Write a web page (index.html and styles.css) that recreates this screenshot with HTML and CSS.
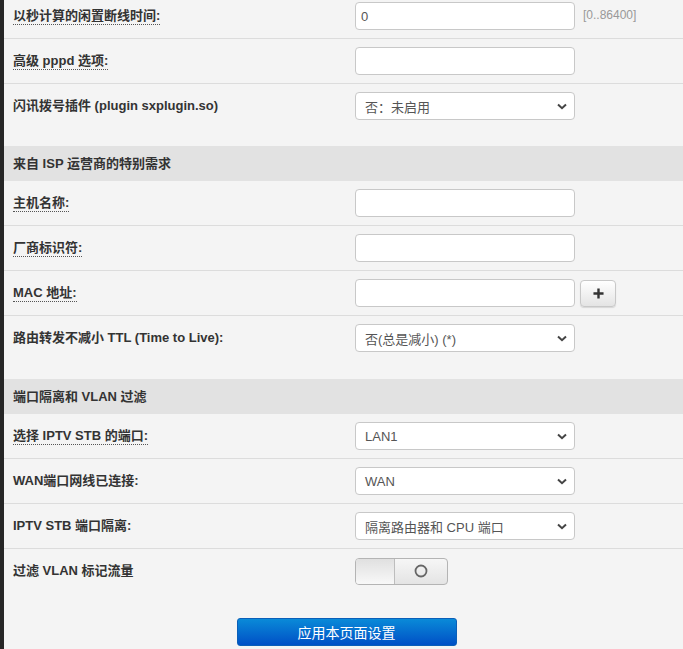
FILE: index.html
```html
<!DOCTYPE html>
<html lang="zh-CN">
<head>
<meta charset="utf-8">
<title>WAN 设置</title>
<link rel="stylesheet" href="styles.css">
</head>
<body>
<div class="page">
  <div class="form">
    <div class="row">
      <div class="label"><span class="tip">以秒计算的闲置断线时间:</span></div>
      <div class="field"><input class="input" type="text" value="0"><span class="hint">[0..86400]</span></div>
    </div>
    <div class="row">
      <div class="label"><span class="tip">高级 pppd 选项:</span></div>
      <div class="field"><input class="input" type="text" value=""></div>
    </div>
    <div class="row tall">
      <div class="label">闪讯拨号插件 (plugin sxplugin.so)</div>
      <div class="field">
        <div class="select"><span>否：未启用</span><svg class="chev" viewBox="0 0 10 7" width="10" height="7"><path d="M1 1.5 L5 5.2 L9 1.5" fill="none" stroke="#444" stroke-width="2"/></svg></div>
      </div>
    </div>
    <div class="section">来自 ISP 运营商的特别需求</div>
    <div class="row">
      <div class="label"><span class="tip">主机名称:</span></div>
      <div class="field"><input class="input" type="text" value=""></div>
    </div>
    <div class="row">
      <div class="label"><span class="tip">厂商标识符:</span></div>
      <div class="field"><input class="input" type="text" value=""></div>
    </div>
    <div class="row">
      <div class="label"><span class="tip">MAC 地址:</span></div>
      <div class="field"><input class="input" type="text" value=""><button class="plus" type="button"><svg viewBox="0 0 12 12" width="11" height="11"><path d="M6 0.5 V11.5 M0.5 6 H11.5" stroke="#333" stroke-width="2.6"/></svg></button></div>
    </div>
    <div class="row tall taller">
      <div class="label">路由转发不减小 TTL (Time to Live):</div>
      <div class="field">
        <div class="select"><span>否(总是减小) (*)</span><svg class="chev" viewBox="0 0 10 7" width="10" height="7"><path d="M1 1.5 L5 5.2 L9 1.5" fill="none" stroke="#444" stroke-width="2"/></svg></div>
      </div>
    </div>
    <div class="section">端口隔离和 VLAN 过滤</div>
    <div class="row">
      <div class="label"><span class="tip">选择 IPTV STB 的端口:</span></div>
      <div class="field">
        <div class="select"><span>LAN1</span><svg class="chev" viewBox="0 0 10 7" width="10" height="7"><path d="M1 1.5 L5 5.2 L9 1.5" fill="none" stroke="#444" stroke-width="2"/></svg></div>
      </div>
    </div>
    <div class="row">
      <div class="label">WAN端口网线已连接:</div>
      <div class="field">
        <div class="select"><span>WAN</span><svg class="chev" viewBox="0 0 10 7" width="10" height="7"><path d="M1 1.5 L5 5.2 L9 1.5" fill="none" stroke="#444" stroke-width="2"/></svg></div>
      </div>
    </div>
    <div class="row">
      <div class="label">IPTV STB 端口隔离:</div>
      <div class="field">
        <div class="select"><span>隔离路由器和 CPU 端口</span><svg class="chev" viewBox="0 0 10 7" width="10" height="7"><path d="M1 1.5 L5 5.2 L9 1.5" fill="none" stroke="#444" stroke-width="2"/></svg></div>
      </div>
    </div>
    <div class="row last">
      <div class="label">过滤 VLAN 标记流量</div>
      <div class="field">
        <div class="toggle"><span class="knob"></span><span class="off"><svg viewBox="0 0 14 14" width="14" height="14"><circle cx="7" cy="7" r="5.5" fill="none" stroke="#666" stroke-width="1.8"/></svg></span></div>
      </div>
    </div>
  </div>
  <div class="actions">
    <button class="apply" type="button">应用本页面设置</button>
  </div>
</div>
</body>
</html>
```

FILE: styles.css
```css
html, body {
  margin: 0;
  padding: 0;
  background: #f4f4f4;
  height: 100%;
  overflow: hidden;
}
body {
  font-family: "Liberation Sans", Arial, "Noto Sans CJK SC", sans-serif;
  font-size: 13px;
  color: #333;
  border-left: 4px solid #262626;
  box-sizing: border-box;
}
.page {
  margin-top: -6px;
}
.row {
  display: grid;
  grid-template-columns: 342px 1fr;
  padding: 8px 0 8px 9px;
  border-bottom: 1px solid #dcdcdc;
}
.row.tall {
  padding-bottom: 26px;
  border-bottom: none;
}
.row.taller {
  padding-bottom: 27px;
}
.row.last {
  border-bottom: none;
}
.label {
  font-weight: bold;
  line-height: 28px;
  height: 28px;
  color: #333;
  white-space: nowrap;
}
.tip {
  border-bottom: 1px dotted #555;
  padding-bottom: 1px;
}
.field {
  display: flex;
  align-items: center;
  height: 28px;
}
.input {
  box-sizing: border-box;
  width: 220px;
  height: 28px;
  border: 1px solid #c8c8c8;
  border-radius: 4px;
  background: #fff;
  padding: 0 5px;
  font-family: "Liberation Sans", Arial, "Noto Sans CJK SC", sans-serif;
  font-size: 13px;
  color: #555;
  outline: none;
}
.hint {
  margin-left: 8px;
  color: #999;
  font-size: 12px;
  margin-top: -3px;
}
.select {
  box-sizing: border-box;
  width: 220px;
  height: 28px;
  border: 1px solid #c8c8c8;
  border-radius: 4px;
  background: #fff;
  padding: 0 0 0 9px;
  display: flex;
  align-items: center;
  justify-content: space-between;
  color: #555;
  position: relative;
}
.chev {
  margin-right: 7px;
}
.section {
  background: #e2e2e2;
  font-weight: bold;
  height: 35px;
  line-height: 35px;
  padding-left: 9px;
  color: #333;
}
.plus {
  box-sizing: border-box;
  width: 36px;
  height: 27px;
  margin-left: 5px;
  border: 1px solid #c8c8c8;
  border-radius: 4px;
  background: linear-gradient(#ffffff, #e4e4e4);
  box-shadow: 0 1px 1px rgba(0,0,0,0.12);
  display: flex;
  align-items: center;
  justify-content: center;
  padding: 0;
}
.toggle {
  box-sizing: border-box;
  width: 93px;
  height: 27px;
  border: 1px solid #b4b4b4;
  border-radius: 4px;
  display: flex;
  overflow: hidden;
  background: linear-gradient(#f6f6f6, #e4e4e4);
}
.knob {
  width: 38px;
  border-right: 1px solid #bdbdbd;
  background: linear-gradient(#e0e0e0, #f8f8f8);
}
.off {
  flex: 1;
  display: flex;
  align-items: center;
  justify-content: center;
}
.actions {
  display: flex;
  justify-content: center;
  padding: 25px 0 0 6px;
}
.apply {
  box-sizing: border-box;
  width: 220px;
  height: 28px;
  border: 1px solid #0a5fb8;
  border-radius: 3px;
  background: linear-gradient(#0a8ad8, #0050c6);
  color: #fff;
  font-family: "Liberation Sans", Arial, "Noto Sans CJK SC", sans-serif;
  font-size: 14px;
  padding: 0;
}
```
